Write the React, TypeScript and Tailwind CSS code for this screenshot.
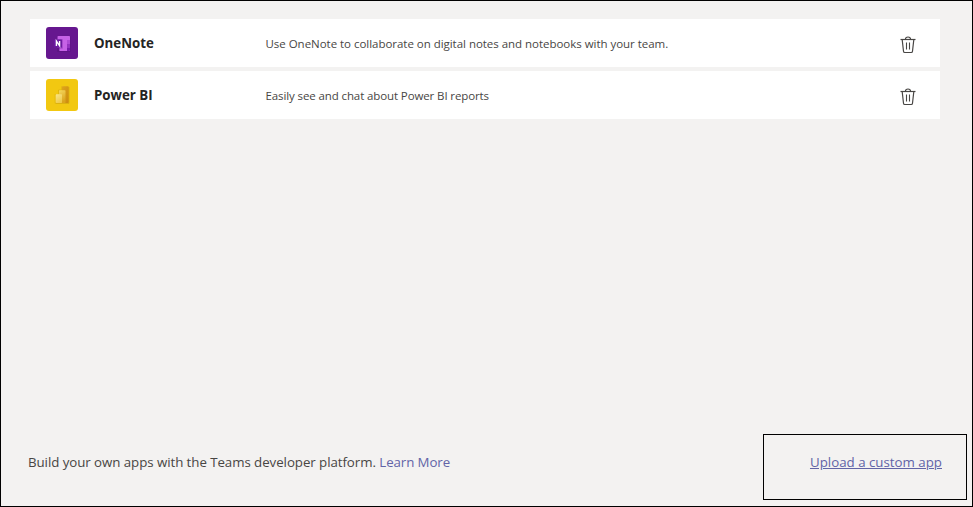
import type { ReactNode } from "react";

function OneNoteIcon() {
  return (
    <svg width="32" height="32" viewBox="0 0 32 32" className="shrink-0">
      <rect width="32" height="32" rx="3" fill="#66178f" />
      <path d="M11.5 9.5H24.6v15.2H11.5z" fill="#4f1275" opacity="0.4" />
      <path d="M12.3 9H23.2a.8.8 0 0 1 .8.8V24H12.3a.8.8 0 0 1-.8-.8V9.8a.8.8 0 0 1 .8-.8z" fill="#c662e6" />
      <rect x="21" y="13" width="3" height="4" fill="#ae4bd5" />
      <rect x="21" y="17" width="3" height="3.5" fill="#9332bf" />
      <path d="M21 20.5h3v2.7a.8.8 0 0 1-.8.8H21z" fill="#7719aa" />
      <path d="M11.5 12.2h5.2v9.4h-5.2z" fill="#8a35b4" opacity="0.7" />
      <path d="M11 20.5h2.4V24.6H11z" fill="#5d1583" />
      <rect x="7.8" y="12.6" width="8.2" height="8" rx="0.7" fill="#6c18a0" />
      <path d="M10.4 19v-4.9l3.2 4.7v-4.7" fill="none" stroke="#fff" strokeWidth="1.4" />
    </svg>
  );
}

function PowerBiIcon() {
  return (
    <svg width="32" height="32" viewBox="0 0 32 32" className="shrink-0">
      <defs>
        <linearGradient id="back" x1="0" y1="0" x2="1" y2="1">
          <stop offset="0" stopColor="#dfa51b" />
          <stop offset="1" stopColor="#cb8a10" />
        </linearGradient>
        <linearGradient id="middle" x1="0" y1="0" x2="0.3" y2="1">
          <stop offset="0" stopColor="#f4d75e" />
          <stop offset="1" stopColor="#dca41b" />
        </linearGradient>
        <linearGradient id="front" x1="0" y1="0" x2="0.5" y2="1">
          <stop offset="0" stopColor="#f9e589" />
          <stop offset="1" stopColor="#efcb4c" />
        </linearGradient>
      </defs>
      <rect width="32" height="32" rx="3" fill="#f2c811" />
      <path d="M9.2 24.4V15M12.5 15v-4h3.2V7.3" fill="none" stroke="#c79a10" strokeWidth="1" opacity="0.35" />
      <path d="M9.5 24.4h13.4V8" fill="none" stroke="#b68b10" strokeWidth="1" opacity="0.4" />
      <rect x="16" y="7.3" width="6.7" height="16.7" rx="0.8" fill="url(#back)" />
      <rect x="13" y="11.3" width="6.5" height="12.7" rx="0.7" fill="url(#middle)" />
      <rect x="9.7" y="15.3" width="6.3" height="8.7" rx="0.7" fill="url(#front)" />
    </svg>
  );
}

function TrashIcon() {
  return (
    <svg width="16" height="18" viewBox="0 0 16 18" fill="none" stroke="#484644" className="shrink-0">
      <path d="M.5 3.5h15" strokeWidth="1.2" />
      <path d="M5.4 3.3C5.5 1.6 6.4 1 8 1s2.5.6 2.6 2.3" strokeWidth="1.1" />
      <path d="M2.2 3.8 3.5 15.2q.1 1.3 1.3 1.3h6.4q1.2 0 1.3-1.3L13.8 3.8" strokeWidth="1.2" />
      <path d="M6.5 6.5v7M9.5 6.5v7" strokeWidth="1.1" />
    </svg>
  );
}

function AppRow({ icon, name, children }: { icon: ReactNode; name: ReactNode; children: ReactNode }) {
  return (
    <li className="flex h-12 items-center bg-white pl-4 pr-6">
      {icon}
      <h2 className="ml-4 w-[171.5px] pb-px text-[13.3px] leading-5 font-bold text-[#252423]">{name}</h2>
      <p className="flex-1 whitespace-nowrap pt-0.5 text-[11.5px] leading-4 text-[#484644]">{children}</p>
      <button aria-label="Remove" className="mt-1">
        <TrashIcon />
      </button>
    </li>
  );
}

export default function App() {
  return (
    <main className="flex h-[507px] w-[973px] flex-col justify-between border border-black bg-[#f3f2f1] pb-1.5 pl-[27px] pr-[5px] pt-[18px] font-['Open_Sans','Noto_Sans',sans-serif]">
      <ul className="ml-0.5 flex w-[910px] flex-col gap-1">
        <AppRow icon={<OneNoteIcon />} name={<span>OneNote</span>}>
          <span className="tracking-[-0.03px]">Use OneNote to collaborate on digital notes and notebooks with your team.</span>
        </AppRow>
        <AppRow icon={<PowerBiIcon />} name={<span>Power BI</span>}>
          <span className="tracking-[-0.11px]">Easily see and chat about Power BI reports</span>
        </AppRow>
      </ul>
      <footer className="flex items-start justify-between text-[13.3px] leading-5 text-[#484644]">
        <p className="mt-[18px] whitespace-nowrap">
          <span className="tracking-[-0.06px]">Build your own apps with the Teams developer platform.</span>{" "}
          <a className="tracking-[-0.1px] text-[#6264a7]">Learn More</a>
        </p>
        <div className="flex h-[66px] w-[204px] justify-end border border-black pr-6 pt-[17px]">
          <a className="whitespace-nowrap text-[#6264a7] underline">Upload a custom app</a>
        </div>
      </footer>
    </main>
  );
}
